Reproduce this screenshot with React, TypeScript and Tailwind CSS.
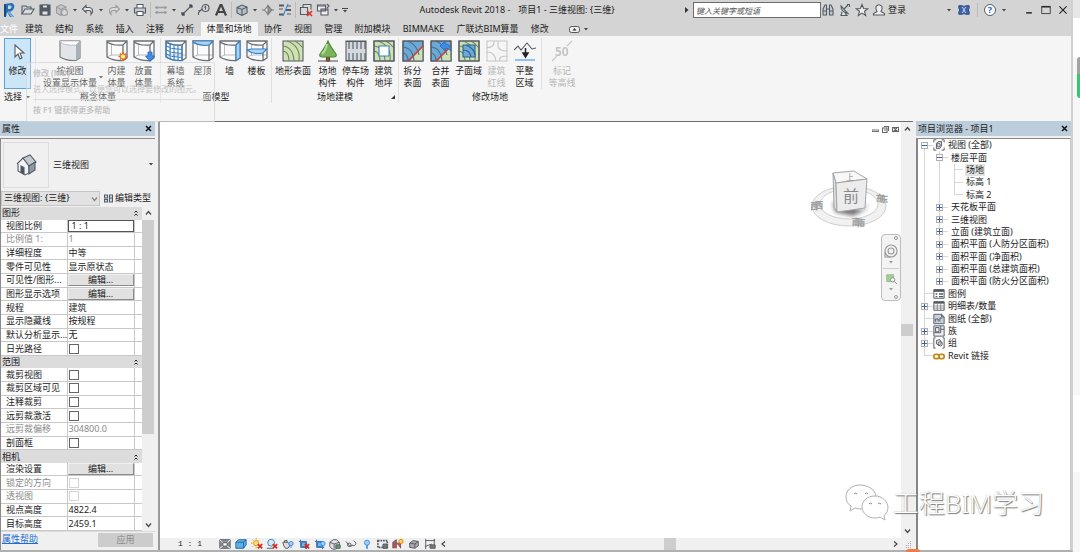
import type { ReactNode } from "react";
import { clsx } from "clsx";

interface IconProps {
  children: ReactNode;
  box?: string;
  className?: string;
}

const Icon = ({ children, box = "0 0 14 14", className = "w-3.5 h-3.5" }: IconProps) => (
  <svg
    className={clsx("shrink-0", className)}
    viewBox={box}
    fill="none"
    stroke="#555b63"
    strokeWidth="1.1"
    aria-hidden="true"
  >
    {children}
  </svg>
);

const Caret = () => (
  <svg className="w-1 h-[3px] shrink-0" viewBox="0 0 4 3" fill="#444" aria-hidden="true">
    <path d="M0 0h4L2 2.6z" />
  </svg>
);

const UP = "M1 4.500l2.500-3L6 4.500";
const DOWN = "M1 1.500l2.500 3L6 1.500";
const LEFT = "M5 0.500L2 3l3 2.500";
const RIGHT = "M2 0.500L5 3L2 5.500";

const Chevron = ({ d }: { d: string }) => (
  <svg className="w-[7px] h-[6px] shrink-0" viewBox="0 0 7 6" fill="none" stroke="#444" strokeWidth="1.2" aria-hidden="true">
    <path d={d} />
  </svg>
);

/* ---------- title bar ---------- */

const boxShape = (
  <>
    <path d="M2 4.500L7 2l5 2v6l-5 2.500L2 10z" fill="#b9c0c8" />
    <path d="M2 4.500l5 2 5-2.500M7 6.500v6" />
  </>
);

const quickAccess: { name: string; icon?: ReactNode; dim?: boolean }[] = [
  { name: "打开", icon: <><path d="M1 11V3h4l1 1h4v2" fill="#ccd0d5" /><path d="M1 11l3-5h9l-3 5z" fill="#d9dde1" /></> },
  { name: "保存", icon: <><path d="M2 2h10v10H2z" fill="#555b63" /><path d="M4.500 2h5v3h-5zM4 8h6v4H4z" fill="#dfe2e5" /></> },
  { name: "同步", dim: true, icon: <><path d="M1.500 4L6 1.500 11 4v5L6 12.500 1.500 10z" fill="#b4b4b4" /><path d="M1.500 4L6 6.500 11 4M6 6.500v6" /><circle cx="9.500" cy="9.500" r="3" fill="#ddd" /></> },
  { name: "caret" },
  { name: "放弃", icon: <path d="M5 2.500L1.500 6 5 9.500V7.500h3q2.500 0 2 4 2.500-3 1-5.500Q10 4.500 8 4.500H5z" fill="#e4e6e8" /> },
  { name: "caret" },
  { name: "重做", dim: true, icon: <path d="M9 2.500L12.500 6 9 9.500V7.500H6q-2.500 0-2 4-2.500-3-1-5.500Q4 4.500 6 4.500h3z" fill="#ddd" /> },
  { name: "caret" },
  { name: "打印", icon: <><path d="M4 5V1.500h6V5" fill="#fff" /><path d="M1.500 5h11v5h-11z" fill="#c9ced3" /><path d="M4 8.500h6v4H4z" fill="#fff" /></> },
  { name: "sep" },
  { name: "测量", dim: true, icon: <path d="M1 4.500h12M1 9.500h12M3 3v3M11 3v3M3 8v3M11 8v3" strokeWidth="1.400" /> },
  { name: "caret" },
  { name: "对齐尺寸标注", icon: <><path d="M3 11L11 3" /><path d="M1.500 9.500l3 3M9.500 1.500l3 3" /><circle cx="3" cy="11" r="1.200" fill="#333" /><circle cx="11" cy="3" r="1.200" fill="#333" /></> },
  { name: "按类别标记", icon: <><circle cx="8.500" cy="5" r="3.500" /><path d="M7.500 4.500l1-1v3M5 6L1.500 9.500V12M1.500 7.500h2" /></> },
  { name: "文字", icon: <path d="M2 12.500L6.500 2h1L12 12.500M4 9h6" strokeWidth="2.200" stroke="#444" /> },
  { name: "sep" },
  { name: "默认三维视图", icon: boxShape },
  { name: "caret" },
  { name: "剖面", icon: <g opacity=".75"><path d="M7 3l3.500 4L7 11 3.500 7z" fill="#eee" /><path d="M7 2.500L10.500 7 7 11.500z" fill="#888" /><path d="M1 7h2M11 7h2" /></g> },
  { name: "细线", icon: <><path d="M1 2.500h5M1 11.500h5" strokeWidth="2" /><path d="M1 6h4M9 3h4M9 11h4" /><path d="M8 7h5" strokeWidth="2" /><path d="M10 1L5 13" stroke="#3388d8" /></> },
  { name: "sep" },
  { name: "关闭隐藏窗口", icon: <><path d="M4 1.500h8v5M4 1.500V5M1.500 4.500h7v7h-7z" fill="#d8dadd" /><path d="M8 8l5 5M13 8l-5 5" stroke="#d8342b" strokeWidth="1.700" /></> },
  { name: "切换窗口", icon: <><path d="M1.500 2h8v6h-8zM5 6h7v6H5z" fill="#eee" /><path d="M1.500 3h8M5 7h7M11 1l2 2-2 2" /></> },
  { name: "caret" },
];

const QuickAccess = () => (
  <div className="flex items-center gap-px">
    <svg className="w-[19px] h-[18px] shrink-0" viewBox="0 0 19 18" aria-hidden="true">
      <path d="M4 3l8-1q4 2 1 7l-3 2 4 5h-4l-3-5-1 5H4z" fill="#286eb4" />
      <path d="M4 3l2 1v12l-2-1z" fill="#174b82" />
      <path d="M8 4.500h3q1.500 2-1 3.500H8z" fill="#d4d4d4" />
      <path d="M9 10l5 6h-3L7.500 11z" fill="#6fb1e4" />
    </svg>
    {quickAccess.map((q, i) => {
      if (q.name === "sep") return <span key={i} className="w-px h-4 mx-px bg-[#bcbcbc]" />;
      return (
        <button
          key={i}
          type="button"
          aria-label={q.name === "caret" ? "更多" : q.name}
          className={clsx("flex justify-center items-center h-5", q.icon ? "w-4" : "w-2", q.dim && "opacity-45")}
        >
          {q.icon ? <Icon>{q.icon}</Icon> : <Caret />}
        </button>
      );
    })}
    <button type="button" aria-label="自定义快速访问工具栏" className="flex flex-col items-center gap-px w-2">
      <span className="w-1.5 h-px bg-[#444]" />
      <Caret />
    </button>
  </div>
);

const TitleBar = () => (
  <div className="flex items-center h-5 leading-3">
    <QuickAccess />
    <h1 className="flex-1 flex justify-center gap-2 whitespace-nowrap">
      <span>Autodesk Revit 2018 -</span>
      <span>项目1 - 三维视图: {"{三维}"}</span>
    </h1>
    <svg className="w-1 h-1.5 mr-1" viewBox="0 0 4 6" fill="#333" aria-hidden="true">
      <path d="M0 0l3.500 3L0 6z" />
    </svg>
    <input
      aria-label="键入关键字或短语"
      placeholder="键入关键字或短语"
      className="w-32 h-4 px-0.5 border border-[#6c6c6c] bg-white text-[8px] italic placeholder:text-[#555]"
    />
    <div className="flex items-center gap-[3px] w-[124px]">
      <button type="button" aria-label="搜索">
        <Icon><path d="M2 12V6l2-4h1.500v10zM12 12V6l-2-4H8.500v10zM5.500 6h3M2 8h3.500M8.500 8H12" fill="#c8cdd2" /></Icon>
      </button>
      <button type="button" aria-label="通讯中心">
        <Icon><path d="M3 3q0 6 7 7.500zM6 6l4-4M4 9l-1 3.500h6L7 10M9 1.500h2.500V4" fill="#dfe2e5" /></Icon>
      </button>
      <button type="button" aria-label="收藏夹">
        <Icon><path d="M7 1.500l1.600 4 4.200.2-3.300 2.600 1.200 4.200L7 10.100 3.300 12.500l1.200-4.200L1.200 5.700l4.200-.2z" fill="#eee" /></Icon>
      </button>
      <button type="button" className="flex items-center gap-0.5 whitespace-nowrap">
        <Icon><path d="M5 8.500Q3.500 6 4 3.500 7 0 10 3.500q.5 2.500-1 5l3.500 2v1.500h-11v-1.500z" fill="#eee" /></Icon>
        登录
      </button>
    </div>
    <div className="flex items-center gap-[7px] pr-[3px]">
      <button type="button" aria-label="账户菜单" className="ml-0.5"><Caret /></button>
      <button type="button" aria-label="Exchange">
        <Icon className="w-3 h-3">
          <path d="M1 2h4q2 2 4 0h4v3q-2 2 0 4v3H9q-2-2-4 0H1V9q2-2 0-4z" fill="#4064a8" stroke="#2c4a88" />
          <path d="M5 3.500l4 7M9 3.500l-4 7" stroke="#cdd9ec" />
        </Icon>
      </button>
      <span className="w-px h-3.5 bg-[#bcbcbc]" />
      <button type="button" aria-label="帮助" className="flex justify-center items-center size-3 -mx-px rounded-full border border-[#53606c] bg-white text-[9px] font-bold text-[#2060c8]">?</button>
      <button type="button" aria-label="帮助菜单"><Caret /></button>
      <span className="w-1" />
      <button type="button" aria-label="最小化"><Icon className="w-2.5 h-2.5"><path d="M3 11h8" stroke="#222" strokeWidth="2" /></Icon></button>
      <button type="button" aria-label="最大化"><Icon className="w-2.5 h-2.5"><path d="M1 2h12v10H1z" stroke="#222" /><path d="M1 2.500h12" stroke="#222" strokeWidth="2" /></Icon></button>
      <button type="button" aria-label="关闭"><Icon className="w-2.5 h-2.5"><path d="M2 2l10 10M12 2L2 12" stroke="#222" strokeWidth="1.500" /></Icon></button>
    </div>
  </div>
);

const tabs = ["建筑", "结构", "系统", "插入", "注释", "分析", "体量和场地", "协作", "视图", "管理", "附加模块", "BIMMAKE", "广联达BIM算量", "修改"];

const Tabs = () => (
  <nav className="flex items-end h-4 leading-[14px] whitespace-nowrap">
    <a href="#file" className="w-[19px] text-white">文件</a>
    <div className="flex justify-between w-[536px]">
      {tabs.map((t) => (
        <a key={t} href="#tab" className={clsx("px-1.5", t === "体量和场地" && "bg-[#f5f5f5]")}>
          {t}
        </a>
      ))}
    </div>
    <button type="button" aria-label="最小化功能区" className="flex items-center gap-1 h-[14px] ml-[14px]">
      <svg className="w-[11px] h-[7px]" viewBox="0 0 11 7" aria-hidden="true">
        <rect x=".5" y=".5" width="10" height="6" rx="2" fill="#eee" stroke="#555" />
        <path d="M3.500 4.500h4l-2-2.500z" fill="#333" />
      </svg>
      <Caret />
    </button>
  </nav>
);

/* ---------- ribbon ---------- */

const massBody = (
  <>
    <path d="M1 1h20v17l-4 2.500Q7 21 1 17z" fill="#fbfbfb" stroke="none" />
    <path d="M5.500 4v11.500M1 17l4.500-2H21" stroke="#a9adb2" strokeWidth=".8" />
    <path d="M1 1h20v17l-4 2.500Q7 21 1 17zM1 2q6 4 16 3l4-4M17 5v15.500" stroke="#6b6f75" strokeWidth="1.300" />
  </>
);
const siteBase = (
  <>
    <path d="M1 1h20v20H1z" fill="#cfe0b4" />
    <path d="M1 6q10 1 11 15M1 11q6 1 6 10M5 1q14 5 12 20M13 1q4 2 8 7" stroke="#6e8a5c" />
  </>
);
const blueBase = (
  <>
    <path d="M1 1h20v20H1z" fill="#6fa8d2" />
    <path d="M8 21h13V7z" fill="#cfe0b4" stroke="none" />
    <path d="M1 7q10 1 11 14M1 13q5 1 5 8M6 1q9 4 11 14" stroke="#39719e" />
    <path d="M1 1h20v20H1z" />
  </>
);
const redCut = <path d="M21 6L6 21" stroke="#d63a2c" strokeWidth="1.500" />;

interface Tool {
  lines: string[];
  icon: ReactNode;
  width?: string;
  off?: boolean;
  menu?: boolean;
}

const massTools: Tool[] = [
  {
    lines: ["按视图", "设置显示体量"],
    width: "w-[66px]",
    menu: true,
    icon: <><path d="M1 1h20v17l-4 2.500Q7 21 1 17z" fill="#e1e4e8" stroke="#777" /><path d="M17 5l4-4v17l-4 2.500z" fill="#aab0b8" stroke="none" /><path d="M1 1h20l-4 4Q7 6 1 2z" fill="#fff" stroke="#999" strokeWidth=".6" /></>,
  },
  {
    lines: ["内建", "体量"],
    icon: <>{massBody}<path d="M17 12v9M12.500 16.500h9M14 13.500l6 6M20 13.500l-6 6" stroke="#e5621f" strokeWidth="1.500" /><circle cx="17" cy="16.500" r="2.500" fill="#fff3a8" stroke="#e5801f" /></>,
  },
  {
    lines: ["放置", "体量"],
    icon: <>{massBody}<path d="M15 12h4v4h2.500L17 21.500 12.500 16H15z" fill="#3e8ee6" stroke="#2368b8" strokeWidth=".8" /></>,
  },
];

const faceTools: Tool[] = [
  {
    lines: ["幕墙", "系统"],
    icon: <>{massBody}<path d="M1 6q8 4 16 3M1 10q8 4 16 3M1 14q8 4 16 3M5 3v16M9 4v16M13 5v15M1 2q8 4 16 3v15.500Q7 21 1 17z" stroke="#3a80c4" /></>,
  },
  { lines: ["屋顶"], icon: <>{massBody}<path d="M1 1h20l-4 4Q7 6 1 2z" fill="#a9d4f2" stroke="#3a80c4" /></> },
  { lines: ["墙"], icon: <>{massBody}<path d="M17 5l4-4v17l-4 2.500z" fill="#a9d4f2" stroke="#3a80c4" /></> },
  { lines: ["楼板"], icon: <>{massBody}<path d="M1 10l4-1h16l-4 4Q7 15 1 10z" fill="#a9d4f2" stroke="#3a80c4" /></> },
];

const siteTools: Tool[] = [
  { lines: ["地形表面"], width: "w-10", icon: siteBase },
  {
    lines: ["场地", "构件"],
    icon: <><path d="M1 21h20" /><path d="M9.500 17h3v4h-3z" fill="#8b5e3c" stroke="#6b452b" /><path d="M11 1q2 5 8 13 1 3-2 3H5q-3 0-2-3 6-8 8-13z" fill="#7ab55c" stroke="#4c8838" /><path d="M10 4q-1 6-5 10" stroke="#b6dc98" strokeWidth="2" /></>,
  },
  {
    lines: ["停车场", "构件"],
    icon: <><path d="M1 1h20v20H1z" fill="#d4d9df" /><path d="M1 1.500h20M1 20.500h20M4 1v8M8 1v8M12 1v8M16 1v8M20 1v8M4 13v8M8 13v8M12 13v8M16 13v8M20 13v8" /></>,
  },
  { lines: ["建筑", "地坪"], icon: <>{siteBase}<path d="M1 1h20v20H1z" /><path d="M6 6h10v10H6z" fill="#fff" stroke="#3a80c4" /></> },
];

const editTools: Tool[] = [
  { lines: ["拆分", "表面"], icon: <>{blueBase}{redCut}</> },
  { lines: ["合并", "表面"], icon: <>{blueBase}{redCut}<path d="M10 6l5-5v3q6 0 6 7-2-3-6-3v3z" fill="#3e8ee6" stroke="#2368b8" strokeWidth=".8" /></> },
  { lines: ["子面域"], icon: <>{siteBase}<path d="M1 1h20v20H1z" /><path d="M5 5h12v12H5z" fill="#6fa8d2" stroke="#2b6597" /><path d="M5 10q7 0 8 7M8 5q8 3 9 10" stroke="#2b6597" /></> },
  { lines: ["建筑", "红线"], off: true, icon: <path d="M1 1h20v20H1zM1 8q8-1 7-7M1 12q8 0 9 9M12 1v6q2 4 9 4M14 21q-2-5 7-5" /> },
  { lines: ["平整", "区域"], icon: <><path d="M0 10l4-4 3 4 6-7 5 6 4-1" /><path d="M11.500 8v5M11.500 17l-2.500-4h5z" stroke="#222" strokeWidth="1.500" fill="#222" /><path d="M1 20h20" stroke="#8ec2f5" strokeWidth="2" /></> },
];

const ToolButton = ({ tool }: { tool: Tool }) => (
  <button
    type="button"
    disabled={tool.off}
    className={clsx("relative flex flex-col items-center h-[51px] pt-0.5 whitespace-nowrap", tool.width ?? "w-[27px]", tool.off && "text-[#b5b5b5]")}
  >
    <Icon box="0 0 22 22" className={clsx("size-[22px] mb-[3px]", tool.off && "opacity-30")}>{tool.icon}</Icon>
    {tool.lines.map((l) => <span key={l}>{l}</span>)}
    {tool.menu && <span className="absolute right-0 bottom-2.5 flex"><Caret /></span>}
  </button>
);

const RibbonGroup = ({ label, className, children }: { label: ReactNode; className?: string; children: ReactNode }) => (
  <section className="flex flex-col gap-0.5 border-r border-[#e0e0e0] text-center">
    <div className={clsx("flex", className)}>{children}</div>
    <h2 className="relative">{label}</h2>
  </section>
);

const Ribbon = () => (
  <div className="relative bg-[#f5f5f5] pt-0.5 pb-[18px] leading-3">
    <div className="flex">
      <RibbonGroup
        className="px-1"
        label={<span className="flex items-center gap-1 pl-1">选择 <Caret /></span>}
      >
        <button type="button" className="flex flex-col items-center w-[27px] h-[51px] pt-0.5 border border-[#5aa2dc] bg-[#cce6f7]">
          <Icon box="0 0 22 22" className="size-[22px] mb-0.5"><path d="M8 4v12l3-3 2 5 2-1-2-5h4z" fill="#fff" /></Icon>
          修改
        </button>
      </RibbonGroup>
      <RibbonGroup className="pl-px pr-[3px]" label="概念体量">
        {massTools.map((t) => <ToolButton key={t.lines.join("")} tool={t} />)}
      </RibbonGroup>
      <RibbonGroup className="px-px" label="面模型">
        {faceTools.map((t) => <ToolButton key={t.lines.join("")} tool={t} />)}
      </RibbonGroup>
      <RibbonGroup
        className="px-px gap-px"
        label={<>场地建模<svg className="absolute right-[3px] top-1 size-1" viewBox="0 0 4 4" fill="#333" aria-hidden="true"><path d="M4 0v4H0z" /></svg></>}
      >
        {siteTools.map((t) => <ToolButton key={t.lines.join("")} tool={t} />)}
      </RibbonGroup>
      <section className="flex flex-col gap-0.5 text-center">
        <div className="flex gap-px">
          {editTools.map((t) => <ToolButton key={t.lines.join("")} tool={t} />)}
          <span className="w-px ml-0.5 bg-[#e0e0e0]" />
          <ToolButton
            tool={{
              lines: ["标记", "等高线"],
              off: true,
              width: "w-[38px]",
              icon: <><path d="M1 21l5-5M16 6l5-5" /><text x="4" y="16" fontSize="12" fontWeight="bold" fill="#555" stroke="none">50</text></>,
            }}
          />
        </div>
        <h2>修改场地</h2>
      </section>
    </div>
    <div role="tooltip" className="absolute left-[26px] top-[26px] w-[189px] h-[60px] border border-[#cfcfcf]/60 bg-[#f5f5f5]/30 px-1.5 text-[8px] text-[#c4c4c4] whitespace-nowrap">
      <p className="pt-1 font-bold">修改 (MD)</p>
      <p className="pt-1 pb-1 border-b border-[#dedede]">进入选择模式，以便您可以选择要修改的图元。</p>
      <p className="pt-1 font-bold">按 F1 键获得更多帮助</p>
    </div>
  </div>
);

/* ---------- properties ---------- */

const PanelHeader = ({ title }: { title: string }) => (
  <header className="flex items-center justify-between h-[15px] px-0.5 bg-[#bccddc]">
    <h2>{title}</h2>
    <button type="button" aria-label={`关闭${title}`} className="pr-px">
      <Icon box="0 0 7 7" className="w-[7px] h-[7px]"><path d="M1 1l5 5M6 1L1 6" stroke="#111" strokeWidth="1.500" /></Icon>
    </button>
  </header>
);

interface Prop {
  name: string;
  value?: string;
  kind?: "edit" | "button" | "check";
  muted?: boolean;
}

const groups: { title: string; props: Prop[] }[] = [
  {
    title: "图形",
    props: [
      { name: "视图比例", value: "1 : 1", kind: "edit" },
      { name: "比例值 1:", value: "1", muted: true },
      { name: "详细程度", value: "中等" },
      { name: "零件可见性", value: "显示原状态" },
      { name: "可见性/图形...", kind: "button" },
      { name: "图形显示选项", kind: "button" },
      { name: "规程", value: "建筑" },
      { name: "显示隐藏线", value: "按规程" },
      { name: "默认分析显示...", value: "无" },
      { name: "日光路径", kind: "check" },
    ],
  },
  {
    title: "范围",
    props: [
      { name: "裁剪视图", kind: "check" },
      { name: "裁剪区域可见", kind: "check" },
      { name: "注释裁剪", kind: "check" },
      { name: "远剪裁激活", kind: "check" },
      { name: "远剪裁偏移", value: "304800.0", muted: true },
      { name: "剖面框", kind: "check" },
    ],
  },
  {
    title: "相机",
    props: [
      { name: "渲染设置", kind: "button" },
      { name: "锁定的方向", kind: "check", muted: true },
      { name: "透视图", kind: "check", muted: true },
      { name: "视点高度", value: "4822.4" },
      { name: "目标高度", value: "2459.1" },
    ],
  },
];

const PropValue = ({ prop }: { prop: Prop }) => {
  if (prop.kind === "button")
    return (
      <button type="button" aria-label={`${prop.name} 编辑`} className="block w-full h-3 border border-t-[#f0f0f0] border-l-[#f0f0f0] border-r-[#8a8a8a] border-b-[#8a8a8a] bg-[#e1e1e1] leading-[10px]">
        编辑...
      </button>
    );
  if (prop.kind === "check")
    return (
      <input
        type="checkbox"
        aria-label={prop.name}
        disabled={prop.muted}
        className={clsx("block size-2.5 ml-px appearance-none border bg-white", prop.muted ? "border-[#d5d5d5]" : "border-[#666]")}
      />
    );
  if (prop.kind === "edit")
    return <input aria-label={prop.name} defaultValue={prop.value} className="block w-full h-3 px-[3px] border border-[#555] bg-white leading-[10px]" />;
  return <span className="pl-px">{prop.value}</span>;
};

const Properties = () => (
  <aside className="flex flex-col w-[155px] shrink-0 leading-3">
    <PanelHeader title="属性" />
    <div className="flex flex-col flex-1 min-h-0 mt-0.5 border-l border-t border-[#8a8a8a]">
      <div className="flex items-center h-[51px] gap-1 pl-0.5 pr-0.5">
        <div className="flex justify-center items-center size-[46px] border border-[#dcdcdc]">
          <Icon box="0 0 24 24" className="size-6">
            <path d="M3 11l6-6 6 7v8l-4 2-7-4v-7" fill="#f2f4f6" />
            <path d="M9 5l7-3 6 7-7 4z" fill="#c3cad1" />
            <path d="M15 13l6-4v8l-6 4z" fill="#8f99a3" />
            <path d="M7 13l3 1.500V21L7 19.500z" fill="#4b5560" />
          </Icon>
        </div>
        <span className="flex-1">三维视图</span>
        <button type="button" aria-label="类型选择器"><Caret /></button>
      </div>
      <div className="flex items-center gap-1 h-4 mb-px">
        <div className="relative">
          <select aria-label="视图" className="w-[99px] h-[15px] pl-0.5 appearance-none border border-[#c6c6c6] bg-[#e2e2e2]">
            <option>三维视图: {"{三维}"}</option>
          </select>
          <span className="absolute right-0.5 top-[5px] pointer-events-none opacity-60"><Chevron d={DOWN} /></span>
        </div>
        <button type="button" className="flex items-center gap-0.5 whitespace-nowrap">
          <Icon box="0 0 9 9" className="size-[9px]"><path d="M.5 1h3v3h-3zM5.500 1h3v7h-3zM.5 5.500h3V8h-3zM5.500 4h3" fill="#cfe0f0" /></Icon>
          编辑类型
        </button>
      </div>
      <div className="flex flex-1 min-h-0">
        <table className="w-[141px] h-full table-fixed bg-white border-collapse whitespace-nowrap">
          <colgroup>
            <col className="w-[66px]" />
            <col className="w-[67px]" />
            <col className="w-2" />
          </colgroup>
          {groups.map((g) => (
            <tbody key={g.title}>
              <tr className="bg-[#dcdcdc]">
                <th colSpan={2} className="p-0 pl-px text-left font-normal">{g.title}</th>
                <td className="p-0">
                  <svg className="w-1 h-1.5" viewBox="0 0 4 6" fill="none" stroke="#222" aria-hidden="true">
                    <path d="M.5 2.500L2 1l1.500 1.500M.5 5.500L2 4l1.500 1.500" />
                  </svg>
                </td>
              </tr>
              {g.props.map((p) => (
                <tr key={p.name} className={clsx("border-b border-[#c8c8c8]", p.muted && "text-[#8a8a8a]")}>
                  <th className="p-0 pl-[5px] text-left font-normal border-r border-[#c8c8c8]">{p.name}</th>
                  <td className="p-0 border-r border-[#c8c8c8]"><PropValue prop={p} /></td>
                  <td className="p-0" />
                </tr>
              ))}
            </tbody>
          ))}
        </table>
        <div className="flex flex-col items-center w-3 py-[3px] bg-[#f0f0f0]">
          <Chevron d={UP} />
          <div className="flex-1 w-full pt-1"><div className="h-[71%] bg-[#cdcdcd]" /></div>
          <Chevron d={DOWN} />
        </div>
      </div>
      <footer className="flex items-start justify-between h-[19px] pr-0.5 pt-px border-t border-[#ddd]">
        <a href="#help" className="pl-px text-[#1a6fd0] underline">属性帮助</a>
        <button type="button" disabled className="w-[55px] h-3.5 bg-[#cccccc] text-[#8a8a8a]">应用</button>
      </footer>
    </div>
  </aside>
);

/* ---------- drawing area ---------- */

const ViewCube = () => (
  <svg className="absolute right-3 top-11 w-[78px] h-[64px]" viewBox="0 0 78 64" aria-label="前">
    <defs>
      <filter id="soft"><feGaussianBlur stdDeviation="2" /></filter>
    </defs>
    <ellipse cx="38" cy="40" rx="37" ry="20" fill="#f1f1f1" stroke="#cfcfcf" />
    <ellipse cx="38" cy="38" rx="29" ry="15" fill="#fff" stroke="#cfcfcf" />
    <path d="M22 36l30 8 6-8-4 8-12 6-18-4z" fill="#777" filter="url(#soft)" />
    <g fontSize="8" fontWeight="bold" fill="#999" stroke="#aaa" strokeWidth=".3">
      <text x="-1" y="43">西</text>
      <text x="4" y="42">西</text>
      <text x="65" y="35">东</text>
      <text x="69" y="36">东</text>
      <text x="41" y="59">南</text>
      <text x="46" y="60">南</text>
    </g>
    <path d="M22 7l21-2 13 8-31 4z" fill="#f8f8f8" stroke="#a5a5a5" />
    <path d="M22 7l3 10 1 29-3-5z" fill="#ddd" stroke="#a5a5a5" />
    <path d="M25 17l31-4-2 29-28 4z" fill="#ececec" stroke="#a5a5a5" />
    <text x="35" y="14" fontSize="8" fill="#888">上</text>
    <text x="32" y="36" fontSize="16" fill="#8a8a8a">前</text>
  </svg>
);

const NavBar = () => (
  <div className="absolute right-0 top-28 flex flex-col items-center justify-between w-5 h-[67px] py-px rounded border border-[#bdbdbd] bg-[#f3f3f3]">
    <span className="self-end size-1 mr-0.5 rounded-full border border-[#999]" />
    <button type="button" aria-label="控制盘">
      <Icon><circle cx="7" cy="7" r="6" stroke="#999" /><circle cx="7" cy="7" r="3" stroke="#999" /><path d="M1 8v5h6" stroke="#999" /></Icon>
    </button>
    <span className="flex opacity-50"><Caret /></span>
    <span className="w-4 h-px bg-[#ccc]" />
    <button type="button" aria-label="缩放">
      <Icon className="w-3 h-3"><path d="M2 2h8v8H2z" fill="#a4cf94" stroke="#9bbf8f" /><circle cx="9" cy="8" r="2.500" fill="#fff" stroke="#888" /><path d="M11 10l3 3" stroke="#888" /></Icon>
    </button>
    <span className="flex opacity-50"><Caret /></span>
    <span className="self-end size-1 mr-0.5 rounded-full border border-[#999]" />
  </div>
);

const bulb = <><circle cx="10.500" cy="6.500" r="2.500" fill="#9fd0ff" stroke="#3c8ee0" /><path d="M10.500 9v3" stroke="#3c8ee0" /></>;
const redX = <path d="M8 7l5 5M13 7l-5 5" stroke="#d3271c" strokeWidth="2" />;

const viewControls: { name: string; icon: ReactNode }[] = [
  { name: "详细程度", icon: <><path d="M1 2h12v10H1z" fill="#8a8f95" /><path d="M1 2l4 4M13 2L9 6M1 12l4-3M13 12L9 9" stroke="#fff" /><path d="M4.500 5.500h5v4h-5z" fill="#fff" /></> },
  { name: "视觉样式", icon: <><path d="M1 5l3-3h9v6l-3 4H1z" fill="#5db0e8" stroke="#25699f" /><path d="M1 5h9v7M10 5l3-3" stroke="#25699f" /></> },
  { name: "日光路径", icon: <><circle cx="6" cy="6" r="3" fill="#ffe066" stroke="#e09a16" /><path d="M6 0v2M6 10v2M0 6h2M2 2l1 1M10 2L9 3M2 10l1-1" stroke="#e09a16" />{redX}</> },
  { name: "阴影", icon: <><circle cx="6" cy="5.500" r="4" fill="#d3e8f8" stroke="#3c7fc0" /><path d="M1 12h7" />{redX}</> },
  { name: "渲染", icon: <><path d="M1 5h5q3 1 3 4l-2 3H4Q2 10 1 5zM3 5V3h3v2" fill="#ddd" />{bulb}</> },
  { name: "裁剪", icon: <><path d="M3 2v9h9M1 4h9v9" stroke="#2f6fb0" /><path d="M4 5h5v5H4z" fill="#75b5e4" stroke="#2f6fb0" />{redX}</> },
  { name: "裁剪区域", icon: <><path d="M3 2v9h9M1 4h9v9" stroke="#2f6fb0" /><path d="M4 5h5v5H4z" fill="#75b5e4" stroke="#2f6fb0" />{bulb}</> },
  { name: "锁定三维视图", icon: <><path d="M1 5l4-3h4l3 3v5l-4 3H4l-3-3z" fill="#e2e5e8" /><path d="M1 5l5 2 6-2M6 7v5" /><path d="M8 8h5v4H8z" fill="#5d9d72" /></> },
  { name: "临时隐藏", icon: <><path d="M1 4l4 5q3 2 3-1 3 3 5-2L10 3" fill="#eee" /><circle cx="5" cy="8" r="2" /></> },
  { name: "显示隐藏图元", icon: <><circle cx="7" cy="5.500" r="3" fill="#9fd0ff" stroke="#3c8ee0" /><path d="M7 8.500v4" stroke="#3c8ee0" strokeWidth="2" /></> },
  { name: "临时视图属性", icon: <><path d="M1 3h11v8H1z" strokeDasharray="2 1" strokeWidth="2" /><path d="M7 7h5v5H7z" fill="#777" /></> },
  { name: "分析模型", icon: <><path d="M1 12V5l4-3v10M5 6h5v6" fill="#c65050" /><circle cx="10.500" cy="4" r="2.500" fill="#ffd257" stroke="#e0871f" /></> },
  { name: "位移集", icon: <><path d="M2 6l4-3 6 1v5l-4 3-6-1z" fill="#aaa" /><path d="M2 6l6 1v5M8 7l4-3" /></> },
  { name: "约束", icon: <><path d="M2 1v12M2 3h11M12 1v7M1 10l8-3" /><path d="M7 8h6v4H7z" fill="#777" /></> },
];

const Canvas = () => (
  <main className="flex flex-col flex-1 min-w-0 border-t border-l-2 border-t-[#6e6e6e] border-l-[#9a9a9a] bg-white">
    <div className="flex flex-1 min-h-0">
      <div className="relative flex-1">
        <div className="absolute right-0.5 top-1 flex gap-[3px]">
          <Icon box="0 0 7 7" className="w-[7px] h-[7px]"><path d="M0 4h7v1.500H0z" stroke="#777" /></Icon>
          <Icon box="0 0 7 7" className="w-[7px] h-[7px]"><path d="M2 .5h4.500V5M.5 2H5v4.500H.5zM2 4h2" stroke="#666" /></Icon>
          <Icon box="0 0 7 7" className="w-[7px] h-[7px]"><path d="M.5 1.500h6v4h-6zM1 1l5 5M6 1L1 6" stroke="#666" /></Icon>
        </div>
        <ViewCube />
        <NavBar />
      </div>
      <div className="flex flex-col items-center w-3 py-1 bg-[#f0f0f0]">
        <Chevron d={UP} />
        <div className="flex flex-col justify-center flex-1 w-full"><div className="h-3 bg-[#cdcdcd]" /></div>
        <Chevron d={DOWN} />
      </div>
    </div>
    <div className="flex items-center h-3 pl-[18px] pr-px bg-[#f0f0f0]">
      <span className="w-[41px] whitespace-nowrap font-['Liberation_Mono',monospace] text-[8px]">1 : 1</span>
      <div className="flex justify-between w-[217px]">
        {viewControls.map((v) => (
          <button key={v.name} type="button" aria-label={v.name}>
            <Icon className="w-3 h-3">{v.icon}</Icon>
          </button>
        ))}
      </div>
      <div className="flex items-center flex-1 h-full pl-1">
        <Chevron d={LEFT} />
        <div className="flex justify-center flex-1 h-full"><div className="w-3 h-full bg-[#cdcdcd]" /></div>
        <Chevron d={RIGHT} />
      </div>
      <svg className="w-[7px] h-[7px] ml-1.5" viewBox="0 0 7 7" fill="#aaa" aria-hidden="true">
        <path d="M5 0h1v1H5zM3 2h1v1H3zM5 2h1v1H5zM1 4h1v1H1zM3 4h1v1H3zM5 4h1v1H5zM1 6h1v1H1zM3 6h1v1H3zM5 6h1v1H5z" />
      </svg>
    </div>
  </main>
);

/* ---------- project browser ---------- */

interface Node {
  label: string;
  level: 0 | 1 | 2;
  toggle?: "+" | "-";
  icon?: ReactNode;
  first?: boolean;
  last?: boolean;
  selected?: boolean;
}

const nodes: Node[] = [
  { label: "视图 (全部)", level: 0, toggle: "-", first: true, icon: <><path d="M1 4V1h3M10 1h3v3M1 10v3h3M13 10v3h-3" /><path d="M4 5l2-2h4v5l-2 3H4z" fill="#dfe3e7" /><circle cx="6.500" cy="7" r="2" /></> },
  { label: "楼层平面", level: 1, toggle: "-" },
  { label: "场地", level: 2, selected: true },
  { label: "标高 1", level: 2 },
  { label: "标高 2", level: 2, last: true },
  { label: "天花板平面", level: 1, toggle: "+" },
  { label: "三维视图", level: 1, toggle: "+" },
  { label: "立面 (建筑立面)", level: 1, toggle: "+" },
  { label: "面积平面 (人防分区面积)", level: 1, toggle: "+" },
  { label: "面积平面 (净面积)", level: 1, toggle: "+" },
  { label: "面积平面 (总建筑面积)", level: 1, toggle: "+" },
  { label: "面积平面 (防火分区面积)", level: 1, toggle: "+", last: true },
  { label: "图例", level: 0, icon: <><path d="M1 2h12v10H1z" fill="#fff" /><path d="M1 3h12" strokeWidth="3" /><path d="M3 7h2M7 7h5M3 10h2M7 10h5" strokeWidth="1.500" /></> },
  { label: "明细表/数量", level: 0, toggle: "+", icon: <><path d="M1 2h12v10H1z" fill="#fff" /><path d="M1 3h12" strokeWidth="2.500" /><path d="M1 7h12M1 9.500h12M5 4v8M9 4v8" strokeWidth=".7" /></> },
  { label: "图纸 (全部)", level: 0, icon: <><path d="M1 1.500h9l3 3v8H1z" fill="#c8d2dc" /><path d="M10 1.500v3h3M3 10V7h3v3M8 10V6h3" /></> },
  { label: "族", level: 0, toggle: "+", icon: <><path d="M1 1h12v12H1z" fill="#eceef0" /><path d="M3 3h4v5H3zM9 1v8H1M9 5h4" /></> },
  { label: "组", level: 0, toggle: "+", icon: <><path d="M3 1H1v12h2M11 1h2v12h-2" /><path d="M4 4l4-1 2 4-3 3-3-2z" fill="#dfe3e7" /><circle cx="8.500" cy="8" r="2.500" /></> },
  { label: "Revit 链接", level: 0, last: true, icon: <><rect x="1" y="5" width="6" height="5" rx="2" stroke="#c08a12" strokeWidth="2" /><rect x="7" y="5" width="6" height="5" rx="2" stroke="#c08a12" strokeWidth="2" /></> },
];

const TreeSlot = ({ node, depth }: { node: Node; depth: number }) => {
  const own = depth === node.level;
  const done = depth === 1 && node.level === 0;
  if (done) return null;
  return (
    <span className="relative flex items-center w-[15px] h-full shrink-0">
      <span
        className={clsx(
          "absolute left-1.5 w-px bg-[#d6d6d6]",
          own && node.first ? "top-1/2" : "top-0",
          own && node.last ? "bottom-1/2" : "bottom-0",
        )}
      />
      {own && <span className="absolute left-1.5 right-0 h-px bg-[#d6d6d6]" />}
      {own && node.toggle && (
        <button type="button" aria-label={node.label} className="relative ml-[3px] size-[7px] border border-[#b0b0b0] bg-white">
          <svg className="block size-[5px]" viewBox="0 0 5 5" stroke="#3a5fa8" aria-hidden="true">
            <path d={node.toggle === "+" ? "M0 2.500h5M2.500 0v5" : "M0 2.500h5"} />
          </svg>
        </button>
      )}
    </span>
  );
};

const Browser = () => (
  <aside className="flex flex-col w-[155px] shrink-0 ml-[3px] leading-3">
    <PanelHeader title="项目浏览器 - 项目1" />
    <div className="flex-1 mt-0.5 border-l-2 border-t border-r border-l-[#858585] border-t-[#8a8a8a] border-r-[#ccc] bg-white">
      <ul className="grid auto-rows-fr h-[223px] whitespace-nowrap">
        {nodes.map((n) => (
          <li key={n.label} className="flex items-center min-h-0">
            {[0, 1, 2].slice(0, n.level + 1).map((d) => <TreeSlot key={d} node={n} depth={d} />)}
            {n.icon && <Icon className="w-3 h-3">{n.icon}</Icon>}
            <span className={clsx("ml-0.5 px-px", n.selected && "bg-[#e3e3e3]")}>{n.label}</span>
          </li>
        ))}
      </ul>
    </div>
  </aside>
);

const Watermark = () => (
  <div className="absolute right-[27px] bottom-7 flex items-center gap-1 pointer-events-none">
    <svg className="w-11 h-[38px]" viewBox="0 0 44 38" fill="#fff" stroke="#b0b0b0" aria-hidden="true">
      <path d="M15 1C7 1 1 6 1 13q0 6 5 9l-1 5 5-3q4 1 7 1c8 0 14-5 14-12S23 1 15 1z" />
      <path d="M30 12c-8 0-13 5-13 11s6 11 13 11q3 0 5-1l5 3-1-4q4-4 4-8c0-7-6-12-13-12z" />
      <path d="M9 10q1-2 3 0M20 10q1-2 3 0M24 20q1-2 3 0M33 20q1-2 3 0" stroke="#888" />
    </svg>
    <p className="text-[26px] leading-9 font-light text-white whitespace-nowrap [text-shadow:1px_1px_1px_#777,0_0_1px_#999]">工程BIM学习</p>
  </div>
);

export default function App() {
  return (
    <div className="flex h-screen overflow-hidden bg-[#f0f0f0] text-[9px] text-[#222] font-['Noto_Sans','Noto_Sans_CJK_SC',sans-serif]">
      <div className="relative flex flex-col flex-1 min-w-0 border-r-2 border-b-2 border-r-[#d0d0d0] border-b-[#b0b0b0]">
        <header className="bg-[#d4d4d4]">
          <TitleBar />
          <Tabs />
          <Ribbon />
        </header>
        <div className="flex flex-1 min-h-0">
          <Properties />
          <span className="w-[3px]" />
          <Canvas />
          <Browser />
        </div>
        <Watermark />
        <span className="absolute right-[151px] -bottom-0.5 w-3.5 h-[3px] rounded-t-sm bg-[#f47a45]" />
      </div>
      <div className="flex flex-col items-end w-[7px] bg-[#f7f7f7]">
        <span className="w-full h-[18px] bg-[#e6e6e6]" />
        <span className="w-full h-[39px] bg-white" />
        <span className="w-[3px] h-[17px] rounded-tl-sm bg-[#a3a3a3]" />
        <span className="w-[3px] h-6 rounded-bl-sm bg-[#2ecc71]" />
        <span className="flex-1" />
        <span className="w-full h-[77px] mb-20 bg-white" />
      </div>
    </div>
  );
}
